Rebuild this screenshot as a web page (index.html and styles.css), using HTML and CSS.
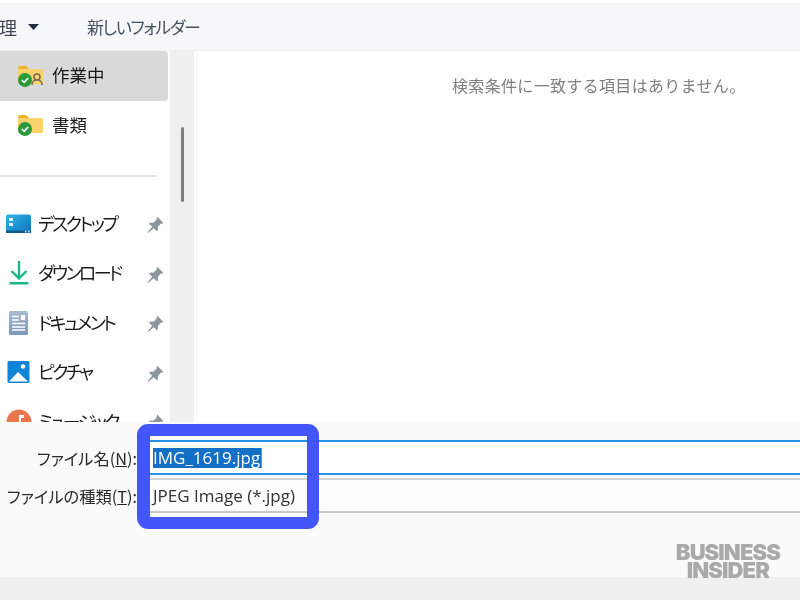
FILE: index.html
```html
<!DOCTYPE html>
<html lang="ja">
<head>
<meta charset="utf-8">
<title>ファイルの保存</title>
<link rel="stylesheet" href="styles.css">
</head>
<body>
<div class="dialog">
  <div class="topgap"></div>
  <header class="toolbar">
    <span class="tool-cut">理</span>
    <svg class="caret" width="11" height="6" viewBox="0 0 11 6"><path d="M0 0h11L5.500 6z" fill="#1f2d45"/></svg>
    <span class="tool-new">新しいフォルダー</span>
  </header>
  <main class="main">
    <nav class="sidebar">
      <div class="row row-top row-selected">
        <svg class="ico-folder" width="26" height="24" viewBox="0 0 26 24">
          <path d="M0 4a2 2 0 0 1 2-2h6l3 3h-11z" fill="#f0b429"/>
          <rect x="0" y="5" width="25" height="15" rx="1.500" fill="#fbd36b"/>
          <circle cx="19" cy="13" r="3" fill="none" stroke="#6f6a5c" stroke-width="1.500"/>
          <path d="M14 21c0-7 10-7 10 0" fill="none" stroke="#6f6a5c" stroke-width="1.500"/>
          <circle cx="7" cy="16" r="7" fill="#2c9a3a"/>
          <path d="M3.800 16l2.400 2.400 4-4.400" fill="none" stroke="#fff" stroke-width="1.600"/>
        </svg>
        <span class="label">作業中</span>
      </div>
      <div class="row row-top">
        <svg class="ico-folder" width="26" height="24" viewBox="0 0 26 24">
          <path d="M0 4a2 2 0 0 1 2-2h6l3 3h-11z" fill="#f0b429"/>
          <rect x="0" y="5" width="25" height="15" rx="1.500" fill="#fbd36b"/>
          <circle cx="7" cy="16" r="7" fill="#2c9a3a"/>
          <path d="M3.800 16l2.400 2.400 4-4.400" fill="none" stroke="#fff" stroke-width="1.600"/>
        </svg>
        <span class="label">書類</span>
      </div>
      <div class="sep"></div>
      <div class="row row-pin">
        <svg class="ico" width="26" height="20" viewBox="0 0 26 20">
          <defs><linearGradient id="d" x1="0" y1="0" x2="1" y2="1"><stop offset="0" stop-color="#2fb4e6"/><stop offset="1" stop-color="#0d74bd"/></linearGradient></defs>
          <rect x="0" y="0.500" width="25" height="18.500" rx="2" fill="url(#d)"/>
          <rect x="0" y="16.500" width="25" height="2.500" fill="#0b5a8c"/>
          <rect x="3" y="4" width="4" height="3" fill="#e6f5fb"/>
          <rect x="3" y="9" width="4" height="3" fill="#e6f5fb"/>
          <rect x="19" y="16.500" width="1.500" height="2" fill="#cfe6f2"/>
          <rect x="22" y="16.500" width="1.500" height="2" fill="#cfe6f2"/>
        </svg>
        <span class="label kana">デスクトップ</span>
        <svg class="pin" width="17" height="17" viewBox="0 0 16 16"><path d="M9.500 0.500l6 6-1.600.8-1 .1-2.700 3 .2 2.800-1.200 1.200-2.800-2.900L1 16l-.5-.5 4.400-5.400-3-2.800 1.300-1.200 2.700.2 3-2.700.2-1z" fill="#8b979f"/></svg>
      </div>
      <div class="row row-pin">
        <svg class="ico" width="26" height="26" viewBox="0 0 26 26">
          <path d="M13 1v17M5.500 11l7.500 7.500 7.500-7.500" fill="none" stroke="#1db58a" stroke-width="2.400"/>
          <rect x="3.500" y="22" width="19" height="2.500" fill="#1db58a"/>
        </svg>
        <span class="label kana">ダウンロード</span>
        <svg class="pin" width="17" height="17" viewBox="0 0 16 16"><path d="M9.500 0.500l6 6-1.600.8-1 .1-2.700 3 .2 2.800-1.200 1.200-2.800-2.900L1 16l-.5-.5 4.400-5.400-3-2.800 1.300-1.200 2.700.2 3-2.700.2-1z" fill="#8b979f"/></svg>
      </div>
      <div class="row row-pin">
        <svg class="ico" width="26" height="26" viewBox="0 0 26 26">
          <defs><linearGradient id="p" x1="0" y1="0" x2="0" y2="1"><stop offset="0" stop-color="#a9bbd2"/><stop offset="1" stop-color="#7c97b8"/></linearGradient></defs>
          <rect x="3" y="1" width="19" height="24" rx="1.500" fill="url(#p)"/>
          <path d="M6 6.500h7M6 10h7M6 13.500h13M6 17h13M6 20h13" stroke="#fff" stroke-width="1.300"/>
          <rect x="15" y="5" width="4" height="5" fill="#fff"/>
        </svg>
        <span class="label kana">ドキュメント</span>
        <svg class="pin" width="17" height="17" viewBox="0 0 16 16"><path d="M9.500 0.500l6 6-1.600.8-1 .1-2.700 3 .2 2.800-1.200 1.200-2.800-2.900L1 16l-.5-.5 4.400-5.400-3-2.800 1.300-1.200 2.700.2 3-2.700.2-1z" fill="#8b979f"/></svg>
      </div>
      <div class="row row-pin">
        <svg class="ico" width="26" height="24" viewBox="0 0 26 24">
          <rect x="1.500" y="1" width="22" height="22" rx="1.500" fill="#0f84d8"/>
          <circle cx="17" cy="6.500" r="2.200" fill="#fff"/>
          <path d="M3 21.500l9-9.500 10 9.500z" fill="#fff"/>
        </svg>
        <span class="label kana">ピクチャ</span>
        <svg class="pin" width="17" height="17" viewBox="0 0 16 16"><path d="M9.500 0.500l6 6-1.600.8-1 .1-2.700 3 .2 2.800-1.200 1.200-2.800-2.900L1 16l-.5-.5 4.400-5.400-3-2.800 1.300-1.200 2.700.2 3-2.700.2-1z" fill="#8b979f"/></svg>
      </div>
      <div class="row row-pin">
        <svg class="ico" width="26" height="26" viewBox="0 0 26 26">
          <circle cx="13" cy="13" r="12.500" fill="#e8774f"/>
          <path d="M14 6v9" stroke="#fff" stroke-width="2"/>
          <path d="M14 6h4v3h-4z" fill="#fff"/>
        </svg>
        <span class="label kana">ミュージック</span>
        <svg class="pin" width="17" height="17" viewBox="0 0 16 16"><path d="M9.500 0.500l6 6-1.600.8-1 .1-2.700 3 .2 2.800-1.200 1.200-2.800-2.900L1 16l-.5-.5 4.400-5.400-3-2.800 1.300-1.200 2.700.2 3-2.700.2-1z" fill="#8b979f"/></svg>
      </div>
    </nav>
    <div class="scrolltrack"><div class="thumb"></div></div>
    <section class="results"><p class="empty">検索条件に一致する項目はありません。</p></section>
  </main>
  <section class="form">
    <div class="field">
      <span class="field-label">ファイル名(<u>N</u>):</span>
      <div class="input input-active"><span class="selected">IMG_1619.jpg</span><span class="cursor"></span></div>
    </div>
    <div class="field">
      <span class="field-label">ファイルの種類(<u>T</u>):</span>
      <div class="input input-type">JPEG Image (*.jpg)</div>
    </div>
    <div class="brand">BUSINESS<br>INSIDER</div>
  </section>
  <footer class="footer"></footer>
  <div class="highlight"></div>
</div>
</body>
</html>
```
FILE: styles.css
```css
html, body {
  margin: 0;
  padding: 0;
  background: #fff;
  overflow: hidden;
}
.dialog {
  position: relative;
  display: flex;
  flex-direction: column;
  width: 800px;
  height: 600px;
  overflow: hidden;
  background: #fff;
  font-family: "Open Sans", "Noto Sans CJK JP", sans-serif;
  filter: blur(0.45px);
}
.topgap {
  height: 3px;
  flex: none;
}
.toolbar {
  display: flex;
  align-items: center;
  height: 47px;
  flex: none;
  background: #f6f7f9;
  border-bottom: 1px solid #eeeff1;
  color: #45505f;
  font-size: 18px;
  font-family: "Noto Sans CJK JP", sans-serif;
}
.tool-cut {
  margin-left: -1px;
  width: 19px;
  color: #3f4754;
}
.caret {
  margin-left: 10px;
  margin-right: 48px;
}
.tool-new {
  font-size: 17px;
  font-feature-settings: "palt";
  letter-spacing: -1.300px;
}
.main {
  display: flex;
  height: 371px;
  flex: none;
}
.sidebar {
  width: 170px;
  flex: none;
  overflow: hidden;
  background: #fff;
  font-family: "Noto Sans CJK JP", sans-serif;
  color: #1a1a1a;
}
.row {
  display: flex;
  align-items: center;
  height: 49.5px;
  box-sizing: border-box;
}
.row-top {
  padding-left: 18px;
  gap: 8px;
}
.row-selected {
  width: 168px;
  background: #d9d9d9;
  border-radius: 0 4px 4px 0;
}
.row-pin {
  padding-left: 6px;
  gap: 6px;
}
.ico-folder, .ico, .pin {
  flex: none;
}
.label {
  font-size: 17.500px;
  white-space: nowrap;
  margin-bottom: 2px;
}
.kana {
  width: 105px;
  font-size: 18px;
  font-feature-settings: "palt";
  letter-spacing: -2.600px;
}
.pin {
  margin-left: -2px;
  margin-top: 2px;
}
.sep {
  height: 2px;
  width: 156px;
  margin: 25px 0 22px;
  background: #e4e4e4;
}
.scrolltrack {
  width: 24px;
  flex: none;
  background: #f0f0f0;
  padding-top: 76px;
  box-sizing: border-box;
}
.thumb {
  width: 3px;
  height: 75px;
  margin-left: 11px;
  background: #7d7d7d;
  border-radius: 2px;
}
.results {
  flex: 1;
  background: #fff;
  border-left: 1px solid #f5f5f5;
  margin-left: 2px;
}
.empty {
  margin: 23px 0 0 255px;
  font-family: "Noto Sans CJK JP", sans-serif;
  font-size: 16px;
  letter-spacing: 0.33px;
  line-height: 22px;
  color: #7f7f7f;
  white-space: nowrap;
}
.form {
  position: relative;
  flex: none;
  height: 155px;
  box-sizing: border-box;
  padding-top: 18px;
  background: #fafafa;
}
.field {
  display: flex;
  align-items: center;
  height: 35px;
  margin-bottom: 3px;
}
.field-label {
  width: 137px;
  flex: none;
  text-align: right;
  font-family: "Noto Sans CJK JP", sans-serif;
  font-size: 16.300px;
  font-feature-settings: "palt";
  color: #2a2a2a;
  white-space: nowrap;
}
.input {
  display: flex;
  align-items: center;
  flex: 1;
  height: 100%;
  box-sizing: border-box;
  margin-left: 13px;
  padding-left: 3px;
  font-size: 17px;
  color: #333;
}
.input-active {
  background: #fff;
  border-top: 2px solid #2690ea;
  border-bottom: 2px solid #2690ea;
}
.input-type {
  background: #fdfdfd;
  border-top: 2px solid #d4d4d4;
  border-bottom: 2px solid #c9c9c9;
}
.selected {
  background: #1270c6;
  color: #fff;
  line-height: 20px;
  padding-right: 1px;
}
.cursor {
  width: 1px;
  height: 20px;
  background: #c07a30;
}
.brand {
  position: absolute;
  right: 20px;
  top: 121px;
  font-family: Inter, sans-serif;
  font-weight: 900;
  font-size: 22px;
  line-height: 18px;
  text-align: center;
  color: #a9a9a9;
  letter-spacing: -0.9px;
}
.footer {
  flex: 1;
  background: #f0f0f0;
}
.highlight {
  position: absolute;
  left: 137px;
  top: 424px;
  width: 182px;
  height: 105px;
  box-sizing: border-box;
  border: solid rgba(58, 79, 251, 0.96);
  border-width: 12px 12px 12px 13px;
  border-radius: 11px;
}
```
